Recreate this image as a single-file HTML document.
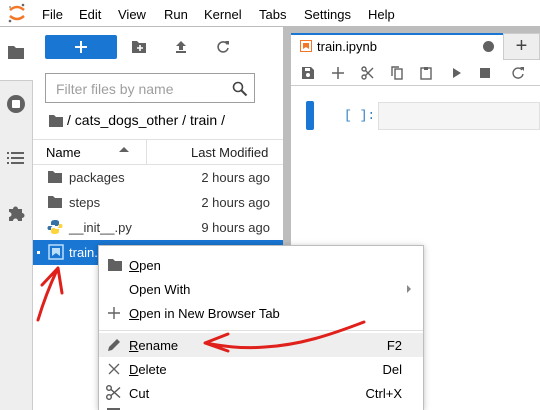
<!DOCTYPE html>
<html style="width:540px;height:410px;overflow:hidden"><head><style>
*{margin:0;padding:0;box-sizing:border-box}
body{width:540px;height:410px;overflow:hidden;background:#fff;font-family:"Liberation Sans",sans-serif;font-size:13px;color:#000;position:relative}
.a{position:absolute}
.menu span{position:absolute;top:7px;font-size:13px;color:#000}
.row{position:absolute;left:33px;width:250px;height:25px;font-size:13px;color:#333}
.row .n{position:absolute;left:36px;top:5px}
.row .d{position:absolute;right:13px;top:5px}
.mi{position:absolute;left:0;width:325px;height:24px;font-size:13px;color:#000}
.mi .t{position:absolute;left:30px;top:5px}
.mi .k{position:absolute;right:22px;top:5px}
u{text-decoration:underline}
</style></head><body>
<div class="a" style="left:0;top:0;width:540px;height:27px;background:#fff;border-bottom:1px solid #bdbdbd"></div>
<svg class="a" style="left:6px;top:2px" width="22" height="22" viewBox="0 0 22 22">
<path d="M4 8 Q11 2 18 8" stroke="#f37726" stroke-width="2.5" fill="none"/>
<path d="M4 14 Q11 20 18 14" stroke="#f37726" stroke-width="2.5" fill="none"/>
<circle cx="17" cy="3" r="1.3" fill="#666"/><circle cx="4" cy="19" r="1.3" fill="#666"/><circle cx="4" cy="5" r="1" fill="#999"/></svg>
<div class="menu">
<span style="left:42px">File</span><span style="left:79px">Edit</span><span style="left:118px">View</span><span style="left:164px">Run</span><span style="left:204px">Kernel</span><span style="left:259px">Tabs</span><span style="left:304px">Settings</span><span style="left:368px">Help</span></div>
<div class="a" style="left:0;top:80px;width:33px;height:330px;background:#eee;border-right:1px solid #ccc;border-top:1px solid #ccc"></div>
<svg class="a" style="left:7px;top:44px" width="18" height="16"><path d="M1 2h6l2 2h8v11H1z" fill="#616161"/></svg>
<svg class="a" style="left:6px;top:94px" width="20" height="20"><circle cx="10" cy="10" r="9" fill="#616161"/><rect x="6" y="6" width="8" height="8" rx="1" fill="#fff"/></svg>
<svg class="a" style="left:7px;top:151px" width="18" height="14" fill="#616161"><rect x="0" y="1" width="2" height="2"/><rect x="4" y="1" width="13" height="2"/><rect x="0" y="6" width="2" height="2"/><rect x="4" y="6" width="13" height="2"/><rect x="0" y="11" width="2" height="2"/><rect x="4" y="11" width="13" height="2"/></svg>
<svg class="a" style="left:7px;top:203px" width="18" height="18"><path d="M2 6h4a2.5 2.5 0 015 0h4v4a2.5 2.5 0 010 5v3H11a2.5 2.5 0 00-5 0H2v-4a2.5 2.5 0 000-5z" fill="#616161"/></svg>
<div class="a" style="left:45px;top:35px;width:72px;height:24px;background:#1976d2;border-radius:2px"><svg class="a" style="left:30px;top:6px" width="12" height="12"><path d="M6 0v12M0 6h12" stroke="#fff" stroke-width="2"/></svg></div>
<svg class="a" style="left:131px;top:40px" width="16" height="14"><path d="M1 1h5l2 2h7v10H1z" fill="#616161"/><path d="M9 5v6M6 8h6" stroke="#fff" stroke-width="1.6"/></svg>
<svg class="a" style="left:174px;top:40px" width="14" height="14"><path d="M7 1l5 5H9v4H5V6H2z" fill="#616161"/><rect x="2" y="11" width="10" height="2" fill="#616161"/></svg>
<svg class="a" style="left:216px;top:40px" width="14" height="14"><path d="M11.5 4.5A5 5 0 1012 8" stroke="#616161" stroke-width="1.6" fill="none"/><path d="M9 1h4v4z" fill="#616161"/></svg>
<div class="a" style="left:45px;top:73px;width:210px;height:30px;border:1px solid #9e9e9e;color:#9e9e9e;font-size:14px;padding:7px 0 0 10px">Filter files by name</div>
<svg class="a" style="left:232px;top:81px" width="16" height="16"><circle cx="6" cy="6" r="4.5" stroke="#444" stroke-width="1.6" fill="none"/><path d="M9.5 9.5l5 5" stroke="#444" stroke-width="2"/></svg>
<svg class="a" style="left:48px;top:114px" width="16" height="14"><path d="M1 1h5l2 2h7v10H1z" fill="#616161"/></svg>
<div class="a" style="left:67px;top:112px;font-size:14px;color:#000">/ cats_dogs_other / train /</div>
<div class="a" style="left:33px;top:139px;width:250px;height:26px;border-top:1px solid #e0e0e0;border-bottom:1px solid #e0e0e0"></div>
<div class="a" style="left:146px;top:139px;width:1px;height:26px;background:#e0e0e0"></div>
<div class="a" style="left:46px;top:145px;font-size:13px">Name</div>
<svg class="a" style="left:119px;top:147px" width="10" height="6"><path d="M0 5l5-5 5 5z" fill="#616161"/></svg>
<div class="a" style="left:191px;top:145px;font-size:13px;color:#222">Last Modified</div>
<div class="row" style="top:165px"><svg class="a" style="left:14px;top:5px" width="16" height="14"><path d="M1 1h5l2 2h7v10H1z" fill="#616161"/></svg><span class="n">packages</span><span class="d">2 hours ago</span></div>
<div class="row" style="top:190px"><svg class="a" style="left:14px;top:5px" width="16" height="14"><path d="M1 1h5l2 2h7v10H1z" fill="#616161"/></svg><span class="n">steps</span><span class="d">2 hours ago</span></div>
<div class="row" style="top:215px"><svg class="a" style="left:14px;top:4px" width="16" height="16"><path d="M8 1C4 1 4 3 4 4v2h4v1H2C0 7 0 11 2 11h2V9c0-1 1-2 2-2h4c1 0 2-1 2-2V3c0-1-1-2-4-2z" fill="#3572a5"/><path d="M8 15c4 0 4-2 4-3v-2H8V9h6c2 0 2-4 0-4h-2v2c0 1-1 2-2 2H6c-1 0-2 1-2 2v2c0 1 1 2 4 2z" fill="#ffd43b"/></svg><span class="n">__init__.py</span><span class="d">9 hours ago</span></div>
<div class="row" style="top:240px;background:#1976d2;color:#fff"><div class="a" style="left:4px;top:11px;width:3px;height:3px;background:#fff"></div><svg class="a" style="left:15px;top:4px" width="16" height="16"><rect x="1" y="1" width="14" height="14" stroke="#bbdefb" stroke-width="1.5" fill="none"/><path d="M4 4h8v8l-4-3-4 3z" fill="#bbdefb"/></svg><span class="n">train.</span></div>
<div class="a" style="left:283px;top:27px;width:8px;height:383px;background:#bdbdbd"></div>
<div class="a" style="left:291px;top:27px;width:249px;height:6px;background:#bdbdbd"></div>
<div class="a" style="left:291px;top:33px;width:212px;height:27px;background:#fff;border-top:2px solid #1976d2"></div>
<div class="a" style="left:503px;top:33px;width:37px;height:27px;background:#eee;border:1px solid #ccc;font-size:20px;text-align:center;line-height:24px;color:#444">+</div>
<svg class="a" style="left:300px;top:40px" width="12" height="12"><rect x="0.5" y="0.5" width="11" height="11" stroke="#f37726" fill="none"/><path d="M3 3h6v6l-3-2-3 2z" fill="#f37726"/></svg>
<div class="a" style="left:317px;top:39px;font-size:13px">train.ipynb</div>
<div class="a" style="left:483px;top:41px;width:11px;height:11px;border-radius:50%;background:#616161"></div>
<div class="a" style="left:291px;top:60px;width:249px;height:26px;border-bottom:1px solid #ccc"></div>
<svg class="a" style="left:301px;top:66px" width="230" height="14" fill="#616161">
<path d="M1 1h9l3 3v9H1z"/><rect x="4" y="2" width="5" height="3" fill="#fff"/><circle cx="7" cy="9" r="2" fill="#fff"/>
<path d="M37 1v12M31 7h12" stroke="#616161" stroke-width="1.5"/>
<g stroke="#616161" stroke-width="1.4" fill="none"><circle cx="63" cy="3" r="2"/><circle cx="63" cy="11" r="2"/><path d="M64 4l8 8M64 10l8-8"/>
<rect x="94" y="3" width="7" height="10"/><path d="M91 10V1h7"/>
<rect x="120" y="2" width="10" height="11"/></g><rect x="123" y="1" width="4" height="3"/>
<path d="M152 2l8 5-8 5z"/><rect x="179" y="2" width="10" height="10"/>
<path d="M221 4a5 5 0 101 4" stroke="#616161" stroke-width="1.4" fill="none"/><path d="M219 1h4v4z"/></svg>
<div class="a" style="left:306px;top:101px;width:8px;height:29px;background:#1976d2;border-radius:2px"></div>
<div class="a" style="left:344px;top:108px;font-family:'Liberation Mono',monospace;font-size:13px;color:#307fc1">[ ]:</div>
<div class="a" style="left:378px;top:102px;width:162px;height:28px;background:#f5f5f5;border:1px solid #e0e0e0"></div>
<div class="a" style="left:98px;top:245px;width:326px;height:165px;background:#fff;border:1px solid #bdbdbd;border-bottom:none;box-shadow:0 1px 6px rgba(0,0,0,.25);overflow:hidden">
<div class="mi" style="top:7px"><svg class="a" style="left:8px;top:5px" width="16" height="14"><path d="M1 1h5l2 2h7v10H1z" fill="#616161"/></svg><span class="t"><u>O</u>pen</span></div>
<div class="mi" style="top:31px"><span class="t">Open With</span><svg class="a" style="left:308px;top:8px" width="5" height="8"><path d="M0 0l4 4-4 4z" fill="#888"/></svg></div>
<div class="mi" style="top:55px"><svg class="a" style="left:9px;top:6px" width="12" height="12"><path d="M6 0v12M0 6h12" stroke="#616161" stroke-width="1.4"/></svg><span class="t"><u>O</u>pen in New Browser Tab</span></div>
<div class="a" style="left:0;top:84px;width:324px;height:1px;background:#e0e0e0"></div>
<div class="mi" style="top:87px;background:#eee"><svg class="a" style="left:8px;top:4px" width="15" height="15"><path d="M1 14l1-4 8-8 3 3-8 8z" fill="#616161"/></svg><span class="t"><u>R</u>ename</span><span class="k">F2</span></div>
<div class="mi" style="top:111px"><svg class="a" style="left:9px;top:6px" width="12" height="12"><path d="M1 1l10 10M11 1L1 11" stroke="#616161" stroke-width="1.3"/></svg><span class="t"><u>D</u>elete</span><span class="k">Del</span></div>
<div class="mi" style="top:135px"><svg class="a" style="left:7px;top:4px" width="15" height="15"><g stroke="#555" stroke-width="1.4" fill="none"><circle cx="3" cy="3" r="2.3"/><circle cx="3" cy="12" r="2.3"/><path d="M5 4.5l9 8M5 10.5l9-8"/></g></svg><span class="t">Cut</span><span class="k">Ctrl+X</span></div>
<div class="a" style="left:8px;top:162px;width:13px;height:3px;background:#616161"></div>
</div>
<svg class="a" style="left:0;top:0" width="540" height="410">
<g stroke="#e0201a" stroke-width="3" fill="none" stroke-linecap="round" stroke-linejoin="round">
<path d="M38 320C44 300 50 285 57 270M42 285L58 268L62 293"/>
<path d="M364 322C330 335 300 345 265 347C240 349 222 346 205 343L228 334M205 343L228 351"/>
</g></svg>
</body></html>
